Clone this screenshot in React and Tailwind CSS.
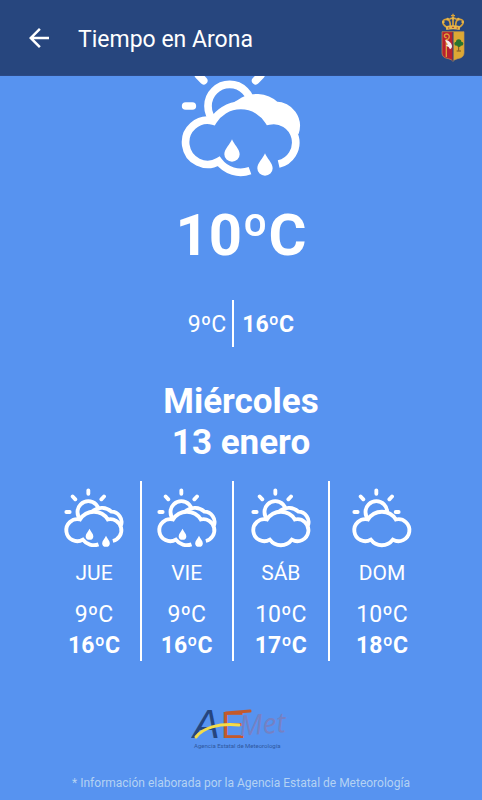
import React from 'react';
import { MdArrowBack } from 'react-icons/md';

const days = [
  { name: 'JUE', icon: 'rain', min: 9, max: 16 },
  { name: 'VIE', icon: 'rain', min: 9, max: 16 },
  { name: 'SÁB', icon: 'cloudy', min: 10, max: 17 },
  { name: 'DOM', icon: 'partly', min: 10, max: 18 },
];

const Drop = ({ x, y }) => (
  <path
    transform={`translate(${x} ${y})`}
    d="M0 0C5 14 23 29 23 45A23 22 0 0 1 -23 45C-23 29 -5 14 0 0Z"
    fill="#fff"
    stroke="none"
  />
);

// type: rain | cloudy | partly, solid fills the cloud at the back
const WeatherIcon = ({ type, solid, className }) => (
  <svg viewBox="26 -44 372 372" className={className} fill="#5793f0" stroke="#fff" strokeWidth="23" aria-hidden="true">
    <circle cx="178" cy="106" r="65" />
    <path d="M178 -24V-3M84 13L100 30M272 13L256 30M46 106H66" strokeLinecap="round" />
    {type === 'partly' ? (
      <path d="M294 106H312" strokeLinecap="round" />
    ) : (
      <path
        d="M190 112Q196 103 208 98A85 85 0 0 1 316 104A62 62 0 0 1 374 186"
        fill={solid ? '#fff' : '#5793f0'}
      />
    )}
    {type === 'rain' ? (
      <>
        <path d="M239 300A82 82 0 0 1 145 272A66 66 0 1 1 128 151A98 98 0 0 1 295 151A66 66 0 1 1 325 280" />
        <Drop x={185} y={206} />
        <Drop x={284} y={248} />
      </>
    ) : (
      <path d="M145 272A66 66 0 1 1 128 151A98 98 0 0 1 295 151A66 66 0 1 1 277 272A82 82 0 0 1 145 272Z" />
    )}
  </svg>
);

const Crest = () => (
  <svg viewBox="0 0 72 150" className="h-[50px] w-6 shrink-0" role="img" aria-label="Escudo de Arona">
    {/* crown */}
    <g fill="none" stroke="#d9a238" strokeWidth="5">
      <path d="M36 2V16M30 8H42" strokeWidth="4" />
      <path d="M18 43C-2 30 4 16 20 20C29 22 28 34 28 42M54 43C74 30 68 16 52 20C43 22 44 34 44 42" />
      <path d="M24 20C30 14 42 14 48 20M36 16V42" />
    </g>
    <g fill="#e6b64b">
      <circle cx="36" cy="16" r="4" />
      <circle cx="20" cy="18" r="4" />
      <circle cx="52" cy="18" r="4" />
      <circle cx="7" cy="27" r="4" />
      <circle cx="65" cy="27" r="4" />
      <path d="M14 40Q36 34 58 40L56 51Q36 46 16 51Z" />
    </g>
    <path d="M21 45H25M33 43H39M47 45H51" stroke="#a83a35" strokeWidth="3" />
    {/* shield */}
    <path d="M3 56H36V145Q32 139 22 137Q3 134 3 120Z" fill="#b8202f" />
    <path d="M36 56H69V120Q69 134 50 137Q40 139 36 145Z" fill="#dda834" />
    <path d="M3 56H69V120Q69 134 50 137Q40 139 36 145Q32 139 22 137Q3 134 3 120Z" fill="none" stroke="#c9974a" strokeWidth="2" />
    <path d="M36 57V144" stroke="#27467e" strokeWidth="3" />
    <path d="M16 132V80C27 80 28 63 17 63C8 63 8 76 17 73" fill="none" stroke="#dda038" strokeWidth="4" />
    <path d="M12 82C22 80 25 86 30 91C35 99 34 106 27 109L23 102L15 98L20 94Z" fill="#f5eeee" />
    <path d="M53 96V113M47 114H60" fill="none" stroke="#755226" strokeWidth="3" />
    <g fill="#28752f">
      <circle cx="46" cy="92" r="6" />
      <circle cx="53" cy="87" r="8" />
      <circle cx="61" cy="92" r="6" />
      <circle cx="54" cy="96" r="6" />
    </g>
  </svg>
);

const AemetLogo = () => (
  <svg viewBox="0 -10 100 62" className="mx-auto h-[62px] w-[100px]" role="img" aria-label="AEMet, Agencia Estatal de Meteorología">
    <g fontFamily="'Liberation Sans', sans-serif">
      <text x="2" y="33" fontSize="40" fontStyle="italic" fill="#25457f">A</text>
      <text x="30" y="33" fontSize="36" fill="#c35a2c">E</text>
      <text x="49" y="31" fontSize="28" fontFamily="'Open Sans', sans-serif" fontStyle="italic" fontWeight="500" transform="rotate(-5 49 31)" fill="#7581c4">Met</text>
    </g>
    <path d="M5 32C12 23 27 18 48 20" fill="none" stroke="#f3dc4a" strokeWidth="3" strokeLinecap="round" />
    <path d="M35 8L59 6" stroke="#c35a2c" strokeWidth="3" strokeLinecap="round" />
    <text x="3" y="43" fontFamily="Roboto, sans-serif" fontSize="6" fill="#2f58a0">Agencia Estatal de Meteorología</text>
  </svg>
);

const App = () => {
  return (
    <div className="min-h-screen overflow-hidden bg-[#5793f0] font-['Roboto',sans-serif] text-white">
      <header className="relative z-10 flex h-[76px] items-center border-b border-[#2c4a86] bg-[#27467e] pr-[17px] pl-6">
        <button type="button" aria-label="Volver">
          <MdArrowBack size={30} />
        </button>
        <h1 className="ml-6 flex-1 pt-[6px] text-[23px]">Tiempo en Arona</h1>
        <Crest />
      </header>

      <main className="-mt-5 text-center">
        <WeatherIcon type="rain" solid className="mx-auto size-[124px]" />
        <p className="mt-5 text-[58px] leading-[70px] font-bold">10ºC</p>

        <div className="mt-[30px] flex items-center justify-center text-[23px] leading-8">
          <span className="pt-[2px] pr-[6px]">9ºC</span>
          <span className="border-l-2 border-white pt-[9px] pb-[6px] pl-2 font-bold">16ºC</span>
        </div>

        <h2 className="mt-[34px] text-[35px] leading-[41px] font-bold">
          Miércoles<br />13 enero
        </h2>

        <ul className="mx-auto mt-[18px] grid w-4/5 grid-cols-[94fr_92fr_97fr_104fr]">
          {days.map(day => (
            <li key={day.name} className="border-r-2 border-white pt-[6px] last:border-r-0">
              <WeatherIcon type={day.icon} className="mx-auto size-[62px]" />
              <p className="mt-2 text-[21px] leading-8">{day.name}</p>
              <p className="mt-[10px] text-[23px] leading-8">{day.min}ºC</p>
              <p className="text-[23px] leading-[30px] font-bold">{day.max}ºC</p>
            </li>
          ))}
        </ul>

        <div className="mt-[34px]">
          <AemetLogo />
        </div>
        <p className="mt-[18px] pb-2 text-xs text-[#b4d2f3]">
          * Información elaborada por la Agencia Estatal de Meteorología
        </p>
      </main>
    </div>
  );
};

export default App;
